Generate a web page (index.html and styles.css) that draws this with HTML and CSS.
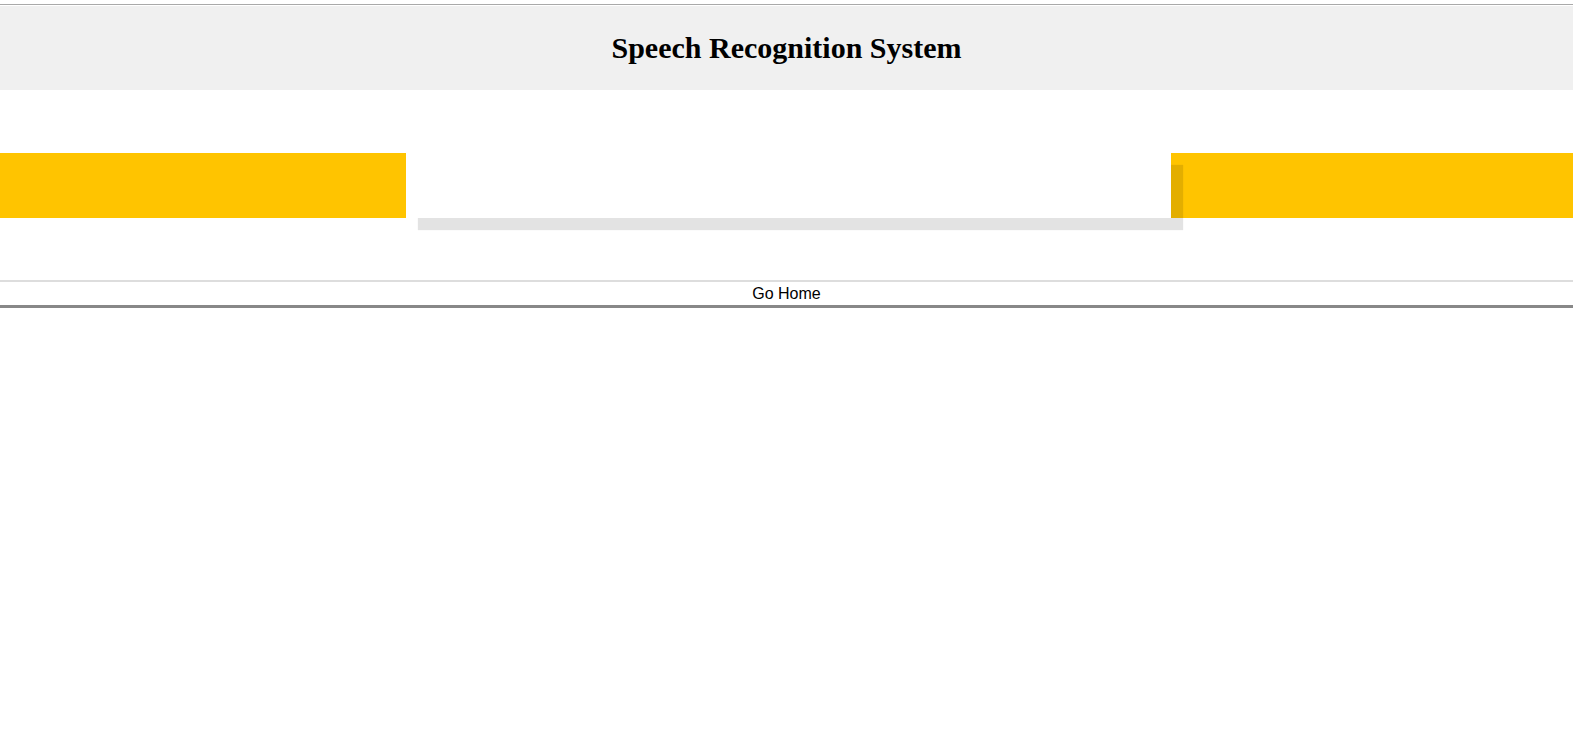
FILE: index.html
```html
<!DOCTYPE html>
<html>
<head>
<meta charset="utf-8">
<title>Speech Recognition System</title>
<link rel="stylesheet" href="styles.css">
</head>
<body>
<div class="topline"></div>
<header class="header"><h1 class="title">Speech Recognition System</h1></header>
<main class="main">
  <div class="row">
    <div class="side side-left"></div>
    <div class="panel"></div>
    <div class="side side-right"></div>
  </div>
</main>
<button class="home">Go Home</button>
</body>
</html>
```
FILE: styles.css
```css
html, body { margin: 0; padding: 0; background: #fff; }
body { padding-top: 4px; font-family: "Liberation Serif", serif; }
.topline { height: 1px; background: #a9a9a9; margin-bottom: 1px; }
.header { height: 84px; background: #f0f0f0; display: flex; align-items: center; justify-content: center; }
.title { margin: 0; font-size: 30px; font-weight: bold; color: #000; }
.main { padding-top: 63px; padding-bottom: 62px; }
.row { display: flex; height: 65px; }
.side { background: #ffc400; }
.side-left { width: 406px; }
.side-right { flex: 1; }
.panel { width: 765px; background: transparent; box-shadow: 12px 12px 1px rgba(0,0,0,0.11); position: relative; z-index: 1; }
.home { display: block; width: 100%; margin: 0; padding: 0; height: 28px; background: #fff; border: none; border-top: 2px solid #dddddd; border-bottom: 3px solid #888888; font-family: "Liberation Sans", Arial, sans-serif; font-size: 16px; color: #000; text-align: center; }
```
